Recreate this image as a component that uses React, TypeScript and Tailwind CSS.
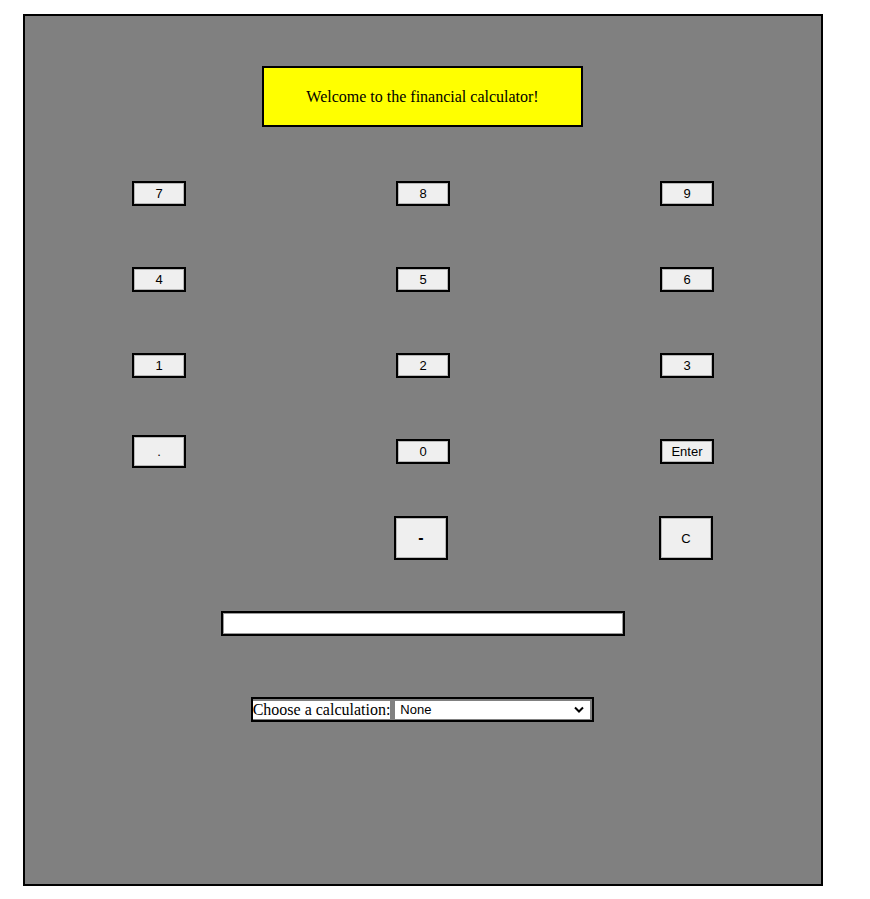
import React from "react";

const btnBase =
  "w-[54px] border-2 border-black bg-[#efefef] shadow-[inset_0_0_0_1px_#b8b8b8] text-[13px] text-black flex items-center justify-center leading-none [font-family:'Liberation_Sans',Arial,sans-serif]";

function Btn({ label, h = "h-[25px]", extra = "" }: { label: string; h?: string; extra?: string }) {
  return <button className={`${btnBase} ${h} ${extra}`}>{label}</button>;
}

export default function App() {
  const rows: string[][] = [
    ["7", "8", "9"],
    ["4", "5", "6"],
    ["1", "2", "3"],
  ];
  return (
    <div className="pt-[14px] pl-[23px] bg-white min-h-[899px]">
      <div className="w-[800px] h-[872px] border-2 border-black bg-[#808080] flex flex-col items-center">
        <div className="mt-[50px] mr-[1px] w-[321px] h-[61px] border-2 border-black bg-[#ffff00] flex items-center justify-center text-[16px] text-black [font-family:'Liberation_Serif','Times_New_Roman',serif]">
          Welcome to the financial calculator!
        </div>

        <div className="mt-[23px] self-start pl-[2px] grid grid-cols-[264px_264px_264px]">
          {rows.map((r) =>
            r.map((k) => (
              <div key={k} className="h-[86px] flex items-center justify-center">
                <Btn label={k} />
              </div>
            ))
          )}
          <div className="h-[86px] flex items-center justify-center">
            <Btn label="." h="h-[33px]" />
          </div>
          <div className="h-[86px] flex items-center justify-center">
            <Btn label="0" />
          </div>
          <div className="h-[86px] flex items-center justify-center">
            <Btn label="Enter" extra="pt-[1px]" />
          </div>
          <div className="h-[86px]" />
          <div className="h-[86px] flex items-center justify-center pt-[2px]">
            <Btn label="-" h="h-[44px]" extra="mr-[4px] text-[16px] font-bold" />
          </div>
          <div className="h-[86px] flex items-center justify-center pt-[2px]">
            <Btn label="C" h="h-[44px]" extra="mr-[2px]" />
          </div>
        </div>

        <input
          type="text"
          className="mt-[31px] w-[404px] h-[25px] border-2 border-black bg-white shadow-[inset_0_0_0_1px_#9a9a9a] outline-none"
        />

        <div className="mt-[61px] mr-[1px] h-[25px] border-2 border-black flex items-center pr-[2px]">
          <span className="bg-white text-[16px] leading-[18px] text-black [font-family:'Liberation_Serif','Times_New_Roman',serif] mr-[5px]">
            Choose a calculation:
          </span>
          <div className="relative w-[195px] h-[18px] bg-white">
            <select className="appearance-none block w-full h-[18px] m-0 p-0 pl-[5px] bg-white text-[13px] text-black leading-[18px] outline-none border-0 [font-family:'Liberation_Sans',Arial,sans-serif]">
              <option>None</option>
            </select>
            <svg
              className="absolute right-[6px] top-[5px] pointer-events-none"
              width="10"
              height="8"
              viewBox="0 0 10 8"
            >
              <path d="M1 1.5 L5 5.5 L9 1.5" stroke="#000" strokeWidth="2" fill="none" />
            </svg>
          </div>
        </div>
      </div>
    </div>
  );
}
